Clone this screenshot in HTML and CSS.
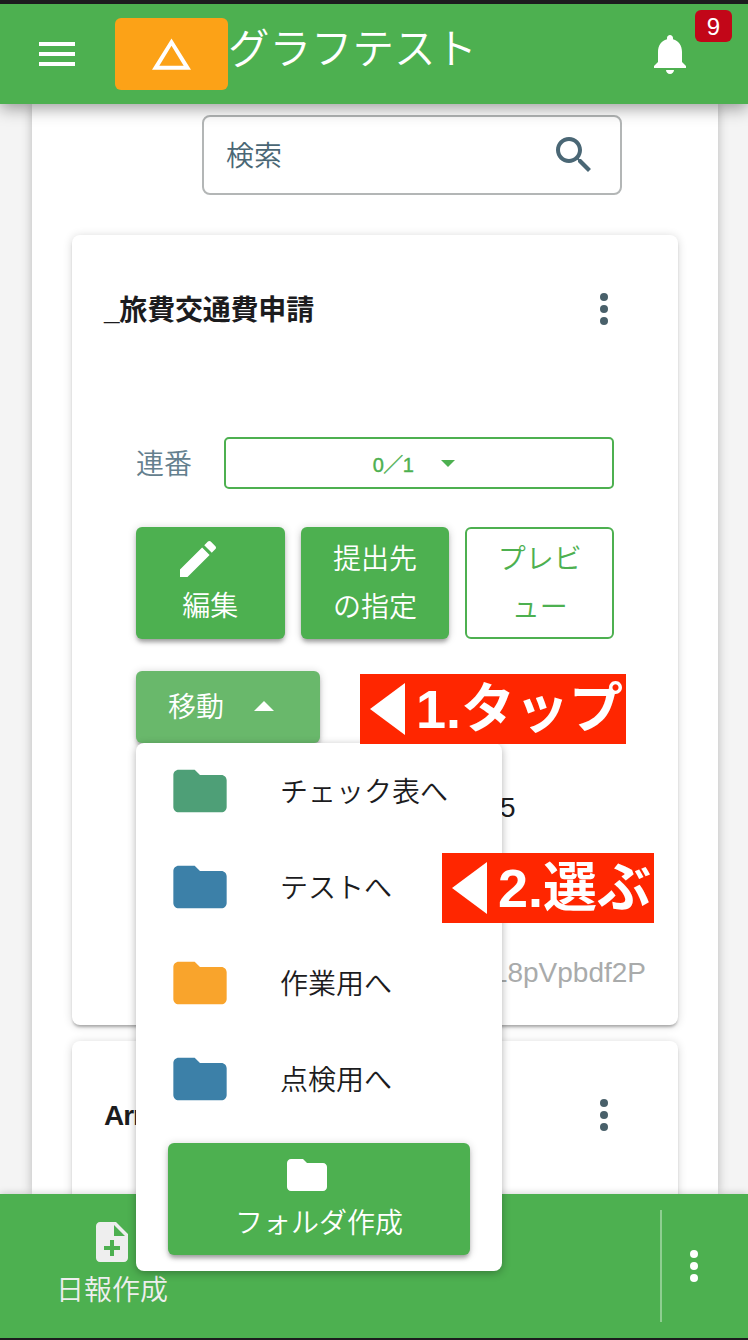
FILE: index.html
```html
<!DOCTYPE html>
<html lang="ja">
<head>
    <meta charset="utf-8">
    <meta name="viewport" content="width=device-width, initial-scale=1">
    <title>グラフテスト</title>
    <link rel="stylesheet" href="styles.css">
</head>
<body>

<div class="page">
    <header class="topbar">
        <svg class="icon menu-icon" viewBox="0 0 24 24"><path d="M3 18h18v-2H3v2zm0-5h18v-2H3v2zm0-7v2h18V6H3z"/></svg>
        <div class="logo">
            <svg viewBox="0 0 40 34"><path fill-rule="evenodd" d="M20 0L40 32H0zM20 7.5L7.5 28h25z"/></svg>
        </div>
        <h1 class="title">グラフテスト</h1>
        <svg class="icon bell-icon" viewBox="0 0 24 24"><path d="M12 22c1.1 0 2-.9 2-2h-4c0 1.1.89 2 2 2zm6-6v-5c0-3.07-1.64-5.64-4.5-6.32V4c0-.83-.67-1.5-1.5-1.5s-1.5.67-1.5 1.5v.68C7.63 5.36 6 7.92 6 11v5l-2 2v1h16v-1l-2-2z"/></svg>
        <span class="badge">9</span>
    </header>

    <main class="content">
        <div class="sheet">
            <div class="search">
                <span>検索</span>
                <svg class="icon" viewBox="0 0 24 24"><path d="M15.5 14h-.79l-.28-.27C15.41 12.59 16 11.11 16 9.5 16 5.91 13.09 3 9.5 3S3 5.91 3 9.5 5.91 16 9.5 16c1.61 0 3.09-.59 4.23-1.57l.27.28v.79l5 4.99L20.49 19l-4.99-5zm-6 0C7.01 14 5 11.99 5 9.5S7.01 5 9.5 5 14 7.01 14 9.5 11.99 14 9.5 14z"/></svg>
            </div>

            <section class="card">
                <div class="card-head">
                    <h2>_旅費交通費申請</h2>
                    <svg class="icon" viewBox="0 0 24 24"><circle cx="12" cy="6" r="2"/><circle cx="12" cy="12" r="2"/><circle cx="12" cy="18" r="2"/></svg>
                </div>
                <div class="card-body">
                    <div class="serial">
                        <label>連番</label>
                        <button class="select">0／1<span class="caret-down"></span></button>
                    </div>
                    <div class="actions">
                        <button class="btn">
                            <svg class="icon edit-icon" viewBox="0 0 24 24"><path d="M3 17.25V21h3.75L17.81 9.94l-3.75-3.75L3 17.25zM20.71 7.04c.39-.39.39-1.02 0-1.41l-2.34-2.34c-.39-.39-1.02-.39-1.41 0l-1.83 1.83 3.75 3.75 1.83-1.83z"/></svg>
                            編集
                        </button>
                        <button class="btn">提出先<br>の指定</button>
                        <button class="btn outline">プレビ<br>ュー</button>
                    </div>
                    <div class="dropdown">
                        <button class="btn move">移動<span class="caret-up"></span></button>
                        <div class="menu">
                            <div class="menu-item"><svg class="folder green" viewBox="0 0 24 24"><path d="M10 4H4c-1.1 0-1.99.9-1.99 2L2 18c0 1.1.9 2 2 2h16c1.1 0 2-.9 2-2V8c0-1.1-.9-2-2-2h-8l-2-2z"/></svg><span>チェック表へ</span></div>
                            <div class="menu-item"><svg class="folder blue" viewBox="0 0 24 24"><path d="M10 4H4c-1.1 0-1.99.9-1.99 2L2 18c0 1.1.9 2 2 2h16c1.1 0 2-.9 2-2V8c0-1.1-.9-2-2-2h-8l-2-2z"/></svg><span>テストへ</span></div>
                            <div class="menu-item"><svg class="folder orange" viewBox="0 0 24 24"><path d="M10 4H4c-1.1 0-1.99.9-1.99 2L2 18c0 1.1.9 2 2 2h16c1.1 0 2-.9 2-2V8c0-1.1-.9-2-2-2h-8l-2-2z"/></svg><span>作業用へ</span></div>
                            <div class="menu-item"><svg class="folder blue" viewBox="0 0 24 24"><path d="M10 4H4c-1.1 0-1.99.9-1.99 2L2 18c0 1.1.9 2 2 2h16c1.1 0 2-.9 2-2V8c0-1.1-.9-2-2-2h-8l-2-2z"/></svg><span>点検用へ</span></div>
                            <button class="btn create">
                                <svg class="icon" viewBox="0 0 24 24"><path d="M10 4H4c-1.1 0-1.99.9-1.99 2L2 18c0 1.1.9 2 2 2h16c1.1 0 2-.9 2-2V8c0-1.1-.9-2-2-2h-8l-2-2z"/></svg>
                                フォルダ作成
                            </button>
                        </div>
                    </div>
                </div>
                <p class="count">5</p>
                <p class="doc-id">L8pVpbdf2P</p>
            </section>

            <section class="card next">
                <div class="card-head">
                    <h2>Arr</h2>
                    <svg class="icon" viewBox="0 0 24 24"><circle cx="12" cy="6" r="2"/><circle cx="12" cy="12" r="2"/><circle cx="12" cy="18" r="2"/></svg>
                </div>
            </section>
        </div>
    </main>

    <footer class="bottombar">
        <div class="report">
            <svg class="icon" viewBox="0 0 24 24"><path d="M14 2H6c-1.1 0-1.99.9-1.99 2L4 20c0 1.1.89 2 1.99 2H18c1.1 0 2-.9 2-2V8l-6-6zm2 14h-3v3h-2v-3H8v-2h3v-3h2v3h3v2zm-3-7V3.5L18.5 9H13z"/></svg>
            <span>日報作成</span>
        </div>
        <div class="more">
            <svg class="icon" viewBox="0 0 24 24"><circle cx="12" cy="6" r="2"/><circle cx="12" cy="12" r="2"/><circle cx="12" cy="18" r="2"/></svg>
        </div>
    </footer>

    <div class="callout first"><svg viewBox="0 0 35 52"><path d="M0 26L35 0v52z"/></svg>1.タップ</div>
    <div class="callout second"><svg viewBox="0 0 35 52"><path d="M0 26L35 0v52z"/></svg>2.選ぶ</div>
</div>

</body>
</html>
```
FILE: styles.css
```css
* {
    box-sizing: border-box;
}

body {
    margin: 0;
    font-family: "Liberation Sans", "Noto Sans CJK JP", sans-serif;
    font-size: 28px;
    font-weight: 350;
    color: #1c1c1e;
}

h1, h2, p {
    margin: 0;
}

svg {
    display: block;
    flex: none;
    fill: currentColor;
}

button {
    font: inherit;
    padding: 0;
    border: none;
}

.icon {
    width: 48px;
    height: 48px;
}

.page {
    position: relative;
    display: flex;
    flex-direction: column;
    width: 748px;
    height: 1340px;
    overflow: hidden;
    background: #f4f4f4;
    border-top: 4px solid #1c1c1e;
    border-bottom: 2px solid #1c1c1e;
}

/* top bar */
.topbar {
    position: relative;
    z-index: 2;
    display: flex;
    align-items: center;
    flex: none;
    height: 100px;
    padding-left: 33px;
    background: #4db050;
    color: #fff;
    box-shadow: 0 4px 16px rgba(0, 0, 0, .4);
}

.logo {
    display: flex;
    justify-content: center;
    width: 113px;
    height: 72px;
    margin-left: 34px;
    padding-top: 20px;
    border-radius: 6px;
    background: #fca217;
}

.logo svg {
    width: 39px;
    height: 34px;
}

.title {
    flex: 1;
    margin-top: -8px;
    font-size: 41.5px;
    line-height: 60px;
    font-weight: 350;
}

.bell-icon {
    margin-right: 54px;
}

.badge {
    position: absolute;
    top: 6px;
    right: 16px;
    width: 37px;
    height: 32px;
    border-radius: 6px;
    background: #c20618;
    font-size: 24px;
    line-height: 33px;
    text-align: center;
}

/* content */
.content {
    display: flex;
    flex: 1;
    min-height: 0;
    padding: 0 30px 0 32px;
}

.sheet {
    flex: 1;
    padding: 11px 40px 0;
    background: #fff;
    box-shadow: 0 0 10px rgba(0, 0, 0, .25);
}

.search {
    display: flex;
    align-items: center;
    justify-content: space-between;
    width: 420px;
    height: 80px;
    margin: 0 0 40px 130px;
    padding: 0 22px 0 22px;
    border: 2px solid #b3b6b6;
    border-radius: 8px;
    color: #4a6775;
}

.search span {
    padding-bottom: 3px;
}

.card {
    height: 790px;
    margin-bottom: 16px;
    padding: 50px 32px 0;
    border-radius: 8px;
    background: #fff;
    box-shadow: 0 3px 3px -1px rgba(0, 0, 0, .28), 0 1px 10px rgba(0, 0, 0, .16);
}

.next {
    height: 200px;
}

.card-head {
    display: flex;
    justify-content: space-between;
    align-items: center;
    height: 48px;
    padding-right: 18px;
}

.card-head h2 {
    padding-bottom: 3px;
    font-size: 28px;
    font-weight: 700;
    letter-spacing: -.2px;
}

.next .card-head h2 {
    padding: 2px 0 0;
    letter-spacing: -1px;
}

.card-head .icon {
    color: #49606a;
}

.card-body {
    padding: 104px 32px 0;
}

.serial {
    display: flex;
    align-items: center;
    gap: 32px;
    height: 52px;
    color: #64808e;
}

.serial label {
    padding-bottom: 3px;
}

.select {
    display: flex;
    align-items: center;
    justify-content: center;
    gap: 28px;
    flex: 1;
    height: 52px;
    padding-right: 10px;
    border: 2px solid #4db050;
    border-radius: 5px;
    background: #fff;
    color: #4db050;
    font-size: 20px;
    letter-spacing: -.5px;
    -webkit-text-stroke: .4px;
}

.caret-down {
    border: 7px solid transparent;
    border-top-color: currentColor;
    border-bottom: none;
}

.caret-up {
    border: 10px solid transparent;
    border-bottom-color: #fff;
    border-top: none;
}

.actions {
    display: grid;
    grid-template-columns: repeat(3, 1fr);
    gap: 16px;
    margin-top: 38px;
}

.btn {
    height: 112px;
    padding-top: 2px;
    border-radius: 6px;
    background: #4db050;
    color: #fff;
    line-height: 48px;
    box-shadow: 0 4px 4px -1px rgba(0, 0, 0, .3), 0 1px 8px rgba(0, 0, 0, .18);
}

.edit-icon {
    margin: -2px 0 0 38px;
}

.outline {
    border: 2px solid #4db050;
    background: #fff;
    color: #4db050;
    box-shadow: none;
}

/* move menu */
.dropdown {
    position: relative;
    width: 184px;
    margin-top: 32px;
}

.move {
    display: flex;
    align-items: center;
    justify-content: space-between;
    width: 184px;
    height: 72px;
    padding: 1px 46px 0 32px;
    background: #69b86b;
}

.caret-up {
    margin-top: -3px;
}

.menu {
    position: absolute;
    z-index: 3;
    top: 72px;
    left: 0;
    width: 366px;
    height: 528px;
    border-radius: 8px;
    background: #fff;
    box-shadow: 0 2px 8px rgba(0, 0, 0, .3);
}

.menu-item {
    display: flex;
    align-items: center;
    gap: 48px;
    height: 96px;
    padding-left: 32px;
}

.menu-item span {
    padding-bottom: 3px;
}

.folder {
    width: 64px;
    height: 64px;
}

.green {
    color: #4e9f77;
}

.blue {
    color: #3c80a8;
}

.orange {
    color: #f9a42c;
}

.create {
    display: flex;
    flex-direction: column;
    align-items: center;
    width: 302px;
    margin: 16px 32px;
    padding-top: 8px;
}

.create .icon {
    margin: 0 24px 1px 0;
}

.count {
    margin-top: 44px;
    padding-left: 396px;
    line-height: 42px;
}

.doc-id {
    margin-top: 123px;
    line-height: 42px;
    text-align: right;
    color: #a9abab;
}

/* bottom bar */
.bottombar {
    position: relative;
    z-index: 2;
    display: flex;
    justify-content: space-between;
    align-items: center;
    flex: none;
    height: 144px;
    padding-left: 56px;
    background: #4db050;
    color: #eee;
    box-shadow: 0 0 8px rgba(0, 0, 0, .2);
}

.report {
    display: flex;
    flex-direction: column;
    align-items: center;
    line-height: 48px;
}

.report .icon {
    margin: 1px 0;
}

.more {
    display: flex;
    align-items: center;
    width: 88px;
    height: 112px;
    padding-left: 8px;
    border-left: 2px solid #8fce91;
    color: #fff;
}

/* step labels laid over the screen */
.callout {
    position: absolute;
    z-index: 4;
    display: flex;
    align-items: center;
    gap: 11px;
    height: 70px;
    padding-left: 10px;
    background: #ff2600;
    color: #fff;
    font-size: 54px;
    font-weight: 700;
    line-height: 70px;
    white-space: nowrap;
}

.callout svg {
    width: 35px;
    height: 52px;
}

.first {
    top: 670px;
    left: 360px;
    width: 266px;
}

.second {
    top: 849px;
    left: 442px;
    width: 212px;
}
```
